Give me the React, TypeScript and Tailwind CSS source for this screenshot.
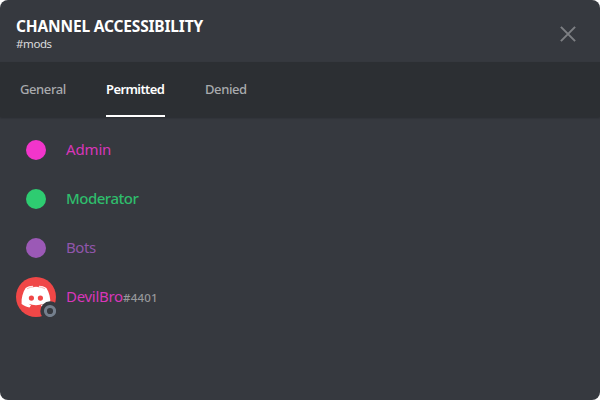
const tabs = [
  { label: "General", className: "ml-5 w-[46px] text-[#a8aaad] tracking-[-0.4px]" },
  { label: "Permitted", className: "ml-10 w-[59px] font-semibold text-white border-white tracking-[-0.6px]" },
  { label: "Denied", className: "ml-10 w-[42px] text-[#a8aaad] tracking-[-0.4px]" },
];

const roles = [
  { name: "Admin", dot: "bg-[#f235cb]", text: "text-[#d936b9] tracking-[-0.15px]" },
  { name: "Moderator", dot: "bg-[#2ecc71]", text: "text-[#2fbd6c] font-medium tracking-[-0.5px]" },
  { name: "Bots", dot: "bg-[#9b59b6]", text: "text-[#9056ab] tracking-[-0.4px]" },
];

function Avatar() {
  return (
    <svg className="h-10 w-10 shrink-0" viewBox="0 0 40 40">
      <circle cx="20" cy="20" r="20" fill="#f04747" />
      <path
        fill="#fff"
        d="M9.6 11 C12 9.5 14.3 8.7 16.8 8.7 L17.4 10 Q20 9.6 22.6 10 L23.2 8.7 C25.7 8.7 28 9.4 30.4 11 C33.2 15.5 34.7 21 34.3 27 C31.5 29.2 29 30.2 26.4 30.5 L24.9 28.2 L27.5 26.8 Q20 29.7 12.4 26.8 L15 28.2 L13.5 30.5 C10.7 30.1 8.2 29 5.6 27 C5.2 21 6.8 15.4 9.6 11Z"
      />
      <path d="M11 11.8 Q14.5 9.8 18 9.8 M29 11.8 Q25.5 9.8 22 9.8" fill="none" stroke="#f04747" strokeWidth=".4" />
      <ellipse cx="15.4" cy="21.1" rx="2.6" ry="2.7" fill="#f04747" />
      <ellipse cx="24.4" cy="21.1" rx="2.6" ry="2.7" fill="#f04747" />
      <circle cx="34" cy="34" r="9.7" fill="#36393f" />
      <circle cx="34" cy="34" r="4.6" fill="none" stroke="#747f8d" strokeWidth="3" />
    </svg>
  );
}

export default function App() {
  return (
    <div className="h-[400px] w-[600px] bg-white font-['Noto_Sans',sans-serif]">
      <div className="flex h-full flex-col overflow-hidden rounded-[8px] bg-[#36393f]">
        <header className="flex h-[62px] shrink-0 justify-between pl-4 pr-6">
          <div className="pt-4 whitespace-nowrap">
            <h1 className="text-[15.5px] leading-5 font-bold tracking-[-0.17px] text-white">CHANNEL ACCESSIBILITY</h1>
            <p className="text-[11.5px] leading-4 tracking-[-0.4px] text-[#dcddde]">#mods</p>
          </div>
          <svg className="mt-[26px] h-4 w-4" viewBox="0 0 16 16" fill="none" stroke="#7d7f83" strokeWidth="2">
            <path d="M.9 .9L15.1 15.1M15.1 .9L.9 15.1" />
          </svg>
        </header>
        <nav className="flex h-[55px] shrink-0 bg-[#2c2f33] shadow-[0_1px_2px_rgba(0,0,0,0.25)]">
          {tabs.map((t) => (
            <button
              key={t.label}
              className={"h-[55px] border-b-2 border-transparent pt-0.5 text-left text-[13px] leading-[51px] font-medium whitespace-nowrap " + t.className}
            >
              {t.label}
            </button>
          ))}
        </nav>
        <main className="flex flex-col gap-[9px] px-4 pt-[13px] text-[15px]">
          {roles.map((r) => (
            <div key={r.name} className="flex h-10 items-center gap-5 pl-2.5">
              <span className={"h-5 w-5 rounded-full " + r.dot} />
              <span className={"pb-0.5 " + r.text}>{r.name}</span>
            </div>
          ))}
          <div className="flex h-10 items-center gap-2.5">
            <Avatar />
            <div className="flex items-baseline pb-0.5 whitespace-nowrap">
              <span className="w-[57px] tracking-[-0.3px] text-[#d936b9]">DevilBro</span>
              <span className="text-[11.5px] font-medium tracking-[0.2px] text-[#96989b]">#4401</span>
            </div>
          </div>
        </main>
      </div>
    </div>
  );
}
